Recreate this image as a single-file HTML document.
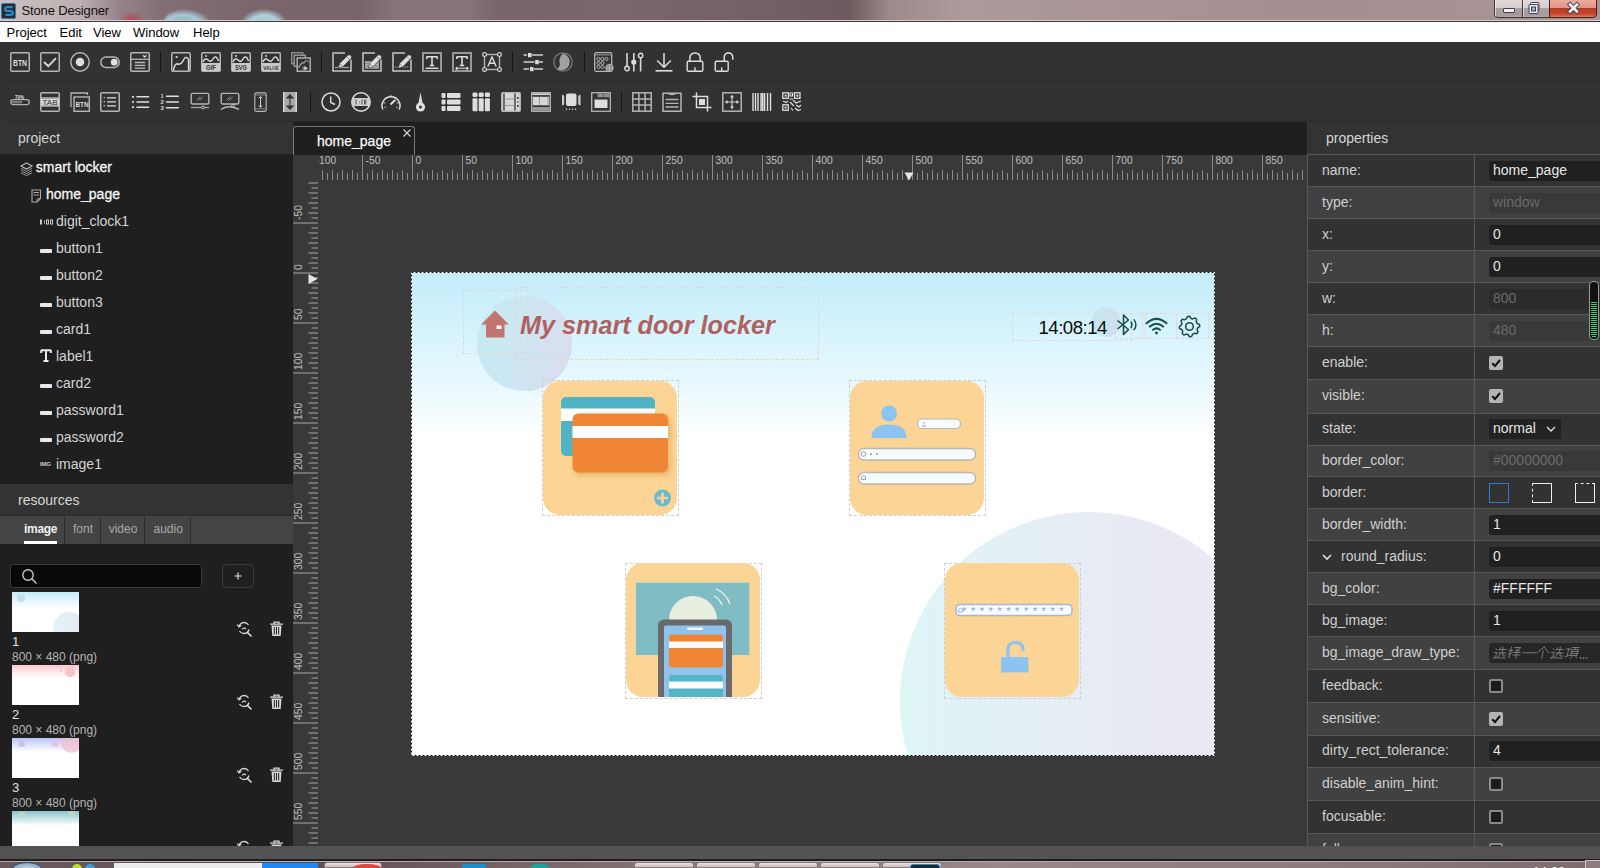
<!DOCTYPE html><html><head><meta charset='utf-8'><style>
*{margin:0;padding:0;box-sizing:border-box}
html,body{width:1600px;height:868px;overflow:hidden;background:#323232;font-family:"Liberation Sans", sans-serif;}
.a{position:absolute}
.t{position:absolute;white-space:nowrap;line-height:1}
svg{position:absolute;overflow:visible}
</style></head><body>
<div class='a' style='left:0;top:0;width:1600px;height:21px;background:linear-gradient(90deg,#cbc1c2 0px,#bcaeb0 80px,#96838a 120px,#846f74 160px,#7a666a 260px,#786468 360px,#867479 395px,#857378 470px,#786468 500px,#7a666a 620px,#736064 760px,#6d5b5f 850px,#9e8a8b 890px,#ad999a 960px,#a99394 1150px,#a48e90 1300px,#a99496 1600px)'></div>
<div class='a' style='left:118px;top:11px;width:28px;height:18px;border-radius:50%;background:radial-gradient(#b04a55,rgba(160,70,80,0) 70%)'></div>
<div class='a' style='left:164px;top:9px;width:48px;height:24px;border-radius:50%;background:radial-gradient(ellipse at 40% 70%,#6aa89a,#a8c8d8 45%,rgba(170,200,215,0) 72%)'></div>
<div class='a' style='left:240px;top:9px;width:48px;height:24px;border-radius:50%;background:radial-gradient(ellipse at 50% 70%,#8cc0c8,#b0d0dc 45%,rgba(170,200,215,0) 72%)'></div>
<div class='a' style='left:0;top:20px;width:1600px;height:1px;background:#d8cfd0'></div>
<div class='a' style='left:0;top:21px;width:1600px;height:1px;background:#3a3a3a'></div>
<div class='a' style='left:1px;top:3px;width:15px;height:16px;border-radius:2px;background:#2f2a2a;border:1px solid #1e7fb0'></div>
<svg style='left:1px;top:3px' width='16' height='16' viewBox='0 0 16 16'><path d='M11.5 4.2 L6.5 4.2 Q4.2 4.2 4.2 6.2 Q4.2 7.8 6.2 8 L9.8 8.2 Q11.8 8.4 11.8 10 Q11.8 11.8 9.5 11.8 L4.5 11.8' fill='none' stroke='#1b8fd0' stroke-width='2.2'/></svg>
<div class='t' style='left:21.5px;top:3.95px;font-size:13px;color:#111;letter-spacing:-0.15px'>Stone Designer</div>
<div class='a' style='left:1494px;top:-3px;width:56px;height:21px;border:1px solid #3c3436;border-radius:0 0 0 4px;background:linear-gradient(#e2dadb 0px,#d6cdce 10px,#aba1a3 10.5px,#a49a9c 17px,#b2a9aa)'></div>
<div class='a' style='left:1549px;top:-3px;width:48px;height:21px;border:1px solid #4a1e18;border-radius:0 0 4px 0;background:linear-gradient(#eeb2a6 0px,#e39484 10px,#b43a24 10.5px,#c8462e 16px,#e07a5e)'></div>
<div class='a' style='left:1495px;top:0;width:1px;height:16px;background:rgba(255,255,255,0.6)'></div>
<div class='a' style='left:1522px;top:0;width:1px;height:17px;background:#3c3436'></div>
<div class='a' style='left:1523px;top:0;width:1px;height:17px;background:rgba(255,255,255,0.55)'></div>
<div class='a' style='left:1503px;top:8px;width:12px;height:5px;border-radius:1px;background:#f2f0f0;border:1px solid #3a3f55'></div>
<svg style='left:1527px;top:1px' width='16' height='14' viewBox='0 0 16 14'><rect x='3.5' y='1.5' width='8.5' height='8' rx='1' fill='#f0eeee' stroke='#3a3f55' stroke-width='1'/><rect x='2' y='3.5' width='9' height='9' rx='1' fill='#f0eeee' stroke='#3a3f55' stroke-width='1'/><rect x='4.5' y='6' width='4' height='4' fill='#aaa' stroke='#3a3f55' stroke-width='1'/></svg>
<svg style='left:1566px;top:2px' width='15' height='12' viewBox='0 0 15 12'><path d='M4 2.5 L11 9.5 M11 2.5 L4 9.5' stroke='#3a3f55' stroke-width='4.4' stroke-linecap='square'/><path d='M4 2.5 L11 9.5 M11 2.5 L4 9.5' stroke='#f4f4f4' stroke-width='2.6' stroke-linecap='square'/></svg>
<div class='a' style='left:0;top:22px;width:1600px;height:20px;background:#fff'></div>
<div class='t' style='left:6.5px;top:26.25px;font-size:13px;color:#000;'>Project</div>
<div class='t' style='left:59.5px;top:26.25px;font-size:13px;color:#000;'>Edit</div>
<div class='t' style='left:93px;top:26.25px;font-size:13px;color:#000;'>View</div>
<div class='t' style='left:133px;top:26.25px;font-size:13px;color:#000;'>Window</div>
<div class='t' style='left:193px;top:26.25px;font-size:13px;color:#000;'>Help</div>
<div class='a' style='left:0;top:42px;width:1600px;height:80px;background:#323232'></div>
<div class='a' style='left:10px;top:81px;width:1590px;height:1px;background:#282828'></div>
<div class='a' style='left:10px;top:121px;width:1590px;height:1px;background:#282828'></div>
<svg style='left:10px;top:52px' width='20' height='20' viewBox='0 0 20 20'><rect x='0.75' y='0.75' width='18.5' height='18.5' rx='1' fill='none' stroke='#b5b5b5' stroke-width='1.5'/><text x='3' y='13.5' font-family='Liberation Sans' font-weight='bold' font-size='8.5' fill='#dedede' textLength='14' lengthAdjust='spacingAndGlyphs'>BTN</text></svg>
<svg style='left:40px;top:52px' width='20' height='20' viewBox='0 0 20 20'><rect x='0.75' y='0.75' width='18.5' height='18.5' rx='1' fill='none' stroke='#b5b5b5' stroke-width='1.5'/><path d='M4 10 L8.3 14.2 L16 6.2' fill='none' stroke='#dedede' stroke-width='1.8'/></svg>
<svg style='left:70px;top:52px' width='20' height='20' viewBox='0 0 20 20'><circle cx='10' cy='10' r='9.2' fill='none' stroke='#b5b5b5' stroke-width='1.5'/><circle cx='10' cy='10' r='4.3' fill='#dedede'/></svg>
<svg style='left:100px;top:52px' width='20' height='20' viewBox='0 0 20 20'><rect x='0.8' y='5' width='18.4' height='10.5' rx='5.2' fill='none' stroke='#b5b5b5' stroke-width='1.5'/><circle cx='14.2' cy='10.2' r='3.4' fill='#dedede'/></svg>
<svg style='left:130px;top:52px' width='20' height='20' viewBox='0 0 20 20'><rect x='0.75' y='0.75' width='18.5' height='18.5' rx='1' fill='none' stroke='#b5b5b5' stroke-width='1.5'/><path d='M1 7.3 H19' stroke='#b5b5b5' stroke-width='1.3'/><path d='M13 3.4 L14.7 5 L16.4 3.4' fill='none' stroke='#dedede' stroke-width='1.3'/><path d='M4.8 10.5 H15.2 M4.8 13.4 H15.2 M4.8 16.2 H15.2' stroke='#bdbdbd' stroke-width='1.3'/></svg>
<div class='a' style='left:160px;top:52px;width:1px;height:20px;background:#141414'></div>
<svg style='left:171px;top:52px' width='20' height='20' viewBox='0 0 20 20'><rect x='0.75' y='0.75' width='18.5' height='18.5' rx='1' fill='none' stroke='#b5b5b5' stroke-width='1.5'/><path d='M2.5 18.5 Q3.5 11 7 12 Q10 13 12.5 8 Q15 3 17.5 7.5 L17.6 18.5' fill='none' stroke='#dedede' stroke-width='1.5'/><circle cx='5.6' cy='5' r='1.1' fill='#dedede'/></svg>
<svg style='left:201px;top:52px' width='20' height='20' viewBox='0 0 20 20'><rect x='0.75' y='0.75' width='18.5' height='18.5' rx='1' fill='none' stroke='#b5b5b5' stroke-width='1.5'/><rect x='1' y='11' width='18' height='8' fill='#c9c9c9'/><path d='M2 10 Q4 5 7 8 T12 7 Q15 2 17.5 9' fill='none' stroke='#dedede' stroke-width='1.4'/><circle cx='5' cy='4' r='0.9' fill='#dedede'/><text x='5.0' y='18' font-family='Liberation Sans' font-weight='bold' font-size='7.2' fill='#333' textLength='10' lengthAdjust='spacingAndGlyphs'>GIF</text></svg>
<svg style='left:231px;top:52px' width='20' height='20' viewBox='0 0 20 20'><rect x='0.75' y='0.75' width='18.5' height='18.5' rx='1' fill='none' stroke='#b5b5b5' stroke-width='1.5'/><rect x='1' y='11' width='18' height='8' fill='#c9c9c9'/><path d='M2 10 Q4 5 7 8 T12 7 Q15 2 17.5 9' fill='none' stroke='#dedede' stroke-width='1.4'/><circle cx='5' cy='4' r='0.9' fill='#dedede'/><text x='4.0' y='18' font-family='Liberation Sans' font-weight='bold' font-size='7.2' fill='#333' textLength='12' lengthAdjust='spacingAndGlyphs'>SVG</text></svg>
<svg style='left:261px;top:52px' width='20' height='20' viewBox='0 0 20 20'><rect x='0.75' y='0.75' width='18.5' height='18.5' rx='1' fill='none' stroke='#b5b5b5' stroke-width='1.5'/><rect x='1' y='11' width='18' height='8' fill='#c9c9c9'/><path d='M2 10 Q4 5 7 8 T12 7 Q15 2 17.5 9' fill='none' stroke='#dedede' stroke-width='1.4'/><circle cx='5' cy='4' r='0.9' fill='#dedede'/><text x='2.25' y='18' font-family='Liberation Sans' font-weight='bold' font-size='6' fill='#333' textLength='15.5' lengthAdjust='spacingAndGlyphs'>VALUE</text></svg>
<svg style='left:291px;top:52px' width='20' height='20' viewBox='0 0 20 20'><rect x='0.7' y='0.7' width='11' height='11' fill='none' stroke='#8c8c8c' stroke-width='1.4'/><rect x='3.2' y='3.2' width='11' height='11' fill='#323232' stroke='#9a9a9a' stroke-width='1.4'/><rect x='6.2' y='6' width='13' height='13.3' fill='#323232' stroke='#b5b5b5' stroke-width='1.4'/><path d='M7.5 16 Q11 9 13 11 Q15 7 17.5 10' fill='none' stroke='#aaa' stroke-width='1.1'/><path d='M13.5 14.5 L16.5 16.3 L13.5 18 Z M12 14.5 V18' fill='#ccc' stroke='#ccc' stroke-width='0.8'/></svg>
<div class='a' style='left:321px;top:52px;width:1px;height:20px;background:#141414'></div>
<svg style='left:332px;top:52px' width='20' height='20' viewBox='0 0 20 20'><path d='M13 1 H1 V19 H19 V7.5' fill='none' stroke='#c8c8c8' stroke-width='1.5'/><path d='M3 15.5 H17' stroke='#aaa' stroke-width='1.2'/><path d='M6.2 16.2 L7.6 11.6 L15.6 3.6 Q17.2 2 18.8 3.6 Q20.4 5.2 18.8 6.8 L10.8 14.8 Z' fill='#dedede' stroke='#323232' stroke-width='0.6'/><path d='M7.8 11.8 L10.6 14.6 M14.6 4.6 L17.8 7.8' stroke='#777' stroke-width='0.7'/></svg>
<svg style='left:362px;top:52px' width='20' height='20' viewBox='0 0 20 20'><path d='M13 1 H1 V19 H19 V7.5' fill='none' stroke='#c8c8c8' stroke-width='1.5'/><rect x='3' y='9' width='14' height='8' fill='#8d8d8d'/><path d='M3 10.2 H17 M3 12.6 H17 M3 15 H17' stroke='#b9b9b9' stroke-width='0.8'/><path d='M6.2 16.2 L7.6 11.6 L15.6 3.6 Q17.2 2 18.8 3.6 Q20.4 5.2 18.8 6.8 L10.8 14.8 Z' fill='#dedede' stroke='#323232' stroke-width='0.6'/><path d='M7.8 11.8 L10.6 14.6 M14.6 4.6 L17.8 7.8' stroke='#777' stroke-width='0.7'/></svg>
<svg style='left:392px;top:52px' width='20' height='20' viewBox='0 0 20 20'><path d='M13 1 H1 V19 H19 V7.5' fill='none' stroke='#c8c8c8' stroke-width='1.5'/><path d='M3 15 H17' stroke='#bbb' stroke-width='1.2' stroke-dasharray='1.2 1.2'/><path d='M6.2 16.2 L7.6 11.6 L15.6 3.6 Q17.2 2 18.8 3.6 Q20.4 5.2 18.8 6.8 L10.8 14.8 Z' fill='#dedede' stroke='#323232' stroke-width='0.6'/><path d='M7.8 11.8 L10.6 14.6 M14.6 4.6 L17.8 7.8' stroke='#777' stroke-width='0.7'/></svg>
<svg style='left:422px;top:52px' width='20' height='20' viewBox='0 0 20 20'><rect x='1' y='1' width='18' height='18' fill='none' stroke='#999' stroke-width='2'/><path d='M4.8 4.8 H15.2 M4.8 4.5 V7 M15.2 4.5 V7 M10 4.8 V13.5 M7.8 13.5 H12.2' fill='none' stroke='#dedede' stroke-width='1.6'/><path d='M3.5 16.3 H16.5' stroke='#dedede' stroke-width='1.4'/></svg>
<svg style='left:452px;top:52px' width='20' height='20' viewBox='0 0 20 20'><rect x='1' y='1' width='18' height='18' fill='none' stroke='#999' stroke-width='2'/><path d='M4.8 4.8 H15.2 M4.8 4.5 V7 M15.2 4.5 V7 M10 4.8 V13.5 M7.8 13.5 H12.2' fill='none' stroke='#dedede' stroke-width='1.6'/><path d='M3.8 16.3 H16.2 M5.5 14.8 L3.8 16.3 L5.5 17.8 M14.5 14.8 L16.2 16.3 L14.5 17.8' fill='none' stroke='#dedede' stroke-width='1.1'/></svg>
<svg style='left:482px;top:52px' width='20' height='20' viewBox='0 0 20 20'><rect x='2.5' y='2.5' width='15' height='15' fill='none' stroke='#b5b5b5' stroke-width='1.4'/><circle cx='2.5' cy='2.5' r='1.9' fill='#323232' stroke='#ccc' stroke-width='1.2'/><circle cx='17.5' cy='2.5' r='1.9' fill='#323232' stroke='#ccc' stroke-width='1.2'/><circle cx='2.5' cy='17.5' r='1.9' fill='#323232' stroke='#ccc' stroke-width='1.2'/><circle cx='17.5' cy='17.5' r='1.9' fill='#323232' stroke='#ccc' stroke-width='1.2'/><path d='M5.8 14.5 L10 5 L14.2 14.5 M7.3 11.3 H12.7' fill='none' stroke='#dedede' stroke-width='1.4'/></svg>
<div class='a' style='left:512px;top:52px;width:1px;height:20px;background:#141414'></div>
<svg style='left:523px;top:52px' width='20' height='20' viewBox='0 0 20 20'><path d='M0.5 3 H4 M9 3 H20 M0.5 10 H11.5 M16 10 H20 M0.5 17 H6 M11 17 H20' stroke='#d0d0d0' stroke-width='1.6'/><rect x='5' y='1' width='3.5' height='4.2' fill='#dedede'/><rect x='12.2' y='8' width='3.5' height='4.2' fill='#dedede'/><rect x='7' y='15' width='3.5' height='4.2' fill='#dedede'/></svg>
<svg style='left:553px;top:52px' width='20' height='20' viewBox='0 0 20 20'><circle cx='10' cy='10' r='9.2' fill='none' stroke='#777' stroke-width='1.3'/><path d='M10 1.6 A8.4 8.4 0 1 1 4 17 Q8 14 6.5 10 Q6 5 10 1.6 Z' fill='#a0a0a0'/></svg>
<div class='a' style='left:584px;top:52px;width:1px;height:20px;background:#141414'></div>
<svg style='left:594px;top:52px' width='20' height='20' viewBox='0 0 20 20'><rect x='0.7' y='0.7' width='17' height='18.6' rx='1.5' fill='none' stroke='#b5b5b5' stroke-width='1.3'/><path d='M1 2.8 H17.5' stroke='#888' stroke-width='1.3'/><circle cx='4.5' cy='7' r='1.6' fill='none' stroke='#bbb' stroke-width='0.9'/><circle cx='8.5' cy='7' r='1.6' fill='none' stroke='#bbb' stroke-width='0.9'/><circle cx='12.5' cy='7' r='1.6' fill='none' stroke='#bbb' stroke-width='0.9'/><circle cx='4.5' cy='11' r='1.6' fill='none' stroke='#bbb' stroke-width='0.9'/><circle cx='8.5' cy='11' r='1.6' fill='none' stroke='#bbb' stroke-width='0.9'/><circle cx='4.5' cy='15' r='1.6' fill='none' stroke='#bbb' stroke-width='0.9'/><circle cx='8.5' cy='15' r='1.6' fill='none' stroke='#bbb' stroke-width='0.9'/><circle cx='15.5' cy='16' r='3.8' fill='#8a8a8a' stroke='#bbb' stroke-width='0.8'/><path d='M12 16 H19 M15.5 12.5 V19.5' stroke='#ccc' stroke-width='0.6'/></svg>
<svg style='left:624px;top:52px' width='20' height='20' viewBox='0 0 20 20'><path d='M3 1 V14.5 M9.8 1 V19.5 M16.6 6 V19.5' stroke='#d8d8d8' stroke-width='1.6'/><circle cx='3' cy='16.5' r='2.2' fill='#323232' stroke='#dedede' stroke-width='1.4'/><circle cx='9.8' cy='10' r='2.6' fill='#dedede'/><circle cx='16.6' cy='3.5' r='2.2' fill='#323232' stroke='#dedede' stroke-width='1.4'/></svg>
<svg style='left:654px;top:52px' width='20' height='20' viewBox='0 0 20 20'><path d='M10 1 V15.5 M3.2 8.5 L10 15.3 L16.8 8.5' fill='none' stroke='#dedede' stroke-width='1.5'/><path d='M1.5 18.8 H18.5' stroke='#dedede' stroke-width='1.6'/></svg>
<svg style='left:685px;top:52px' width='20' height='20' viewBox='0 0 20 20'><path d='M4.8 9 V6.5 Q4.8 1 10 1 Q15.2 1 15.2 6.5 V9' fill='none' stroke='#dedede' stroke-width='1.5'/><rect x='2.2' y='9.2' width='15.6' height='10' rx='1.3' fill='none' stroke='#dedede' stroke-width='1.4'/><path d='M10 15.2 V19' stroke='#dedede' stroke-width='1.4'/></svg>
<svg style='left:714px;top:52px' width='20' height='20' viewBox='0 0 20 20'><path d='M10.2 9 V5.8 Q10.2 1 14.5 1 Q18.8 1 18.8 5.8 V7.8' fill='none' stroke='#dedede' stroke-width='1.5'/><rect x='1.2' y='9.2' width='13' height='10' rx='1.3' fill='none' stroke='#dedede' stroke-width='1.4'/><path d='M7.7 15.2 V19' stroke='#dedede' stroke-width='1.4'/></svg>
<svg style='left:10px;top:92px' width='20' height='20' viewBox='0 0 20 20'><rect x='0.7' y='7.6' width='18.6' height='5' rx='2.5' fill='none' stroke='#b0b0b0' stroke-width='1.3'/><rect x='2' y='8.8' width='10' height='2.6' fill='#777'/><text x='5' y='6.5' font-family='Liberation Sans' font-weight='bold' font-size='5.5' fill='#dedede' textLength='9' lengthAdjust='spacingAndGlyphs'>70%</text></svg>
<svg style='left:40px;top:92px' width='20' height='20' viewBox='0 0 20 20'><rect x='0.75' y='0.75' width='18.5' height='18.5' rx='1' fill='none' stroke='#b5b5b5' stroke-width='1.5'/><path d='M1 5.8 H19 M1 14 H19' stroke='#b5b5b5' stroke-width='1.3'/><rect x='1' y='6.5' width='18' height='7' fill='#d4d4d4'/><text x='2.5' y='12.8' font-family='Liberation Sans' font-weight='normal' font-size='7.5' fill='#333' textLength='15' lengthAdjust='spacingAndGlyphs'>TAB</text></svg>
<svg style='left:70px;top:92px' width='20' height='20' viewBox='0 0 20 20'><path d='M1 15.3 V1 H17.5 V3' fill='none' stroke='#b5b5b5' stroke-width='1.3'/><rect x='4' y='5' width='15.3' height='14.3' fill='#323232' stroke='#b5b5b5' stroke-width='1.4'/><text x='5.5' y='15' font-family='Liberation Sans' font-weight='bold' font-size='7.2' fill='#dedede' textLength='13' lengthAdjust='spacingAndGlyphs'>BTN</text></svg>
<svg style='left:100px;top:92px' width='20' height='20' viewBox='0 0 20 20'><rect x='0.75' y='0.75' width='18.5' height='18.5' rx='1' fill='none' stroke='#b5b5b5' stroke-width='1.5'/><path d='M7 5.8 H16 M7 9.8 H16 M7 13.8 H16' stroke='#dedede' stroke-width='1.3'/><path d='M3.3 5 L5.2 5 L4.25 6.5 Z M3.3 9 L5.2 9 L4.25 10.5 Z M3.3 13 L5.2 13 L4.25 14.5 Z' fill='#dedede'/></svg>
<svg style='left:130px;top:92px' width='20' height='20' viewBox='0 0 20 20'><circle cx='3' cy='4.8' r='1.1' fill='#dedede'/><circle cx='3' cy='10' r='1.1' fill='#dedede'/><circle cx='3' cy='15.2' r='1.1' fill='#dedede'/><path d='M7 4.8 H18.5 M7 10 H18.5 M7 15.2 H18.5' stroke='#dedede' stroke-width='1.6' stroke-linecap='round'/></svg>
<svg style='left:160px;top:92px' width='20' height='20' viewBox='0 0 20 20'><path d='M6.5 4.3 H18.3 M6.5 10 H18.3 M6.5 15.7 H18.3' stroke='#dedede' stroke-width='1.6' stroke-linecap='round'/><text x='0.8' y='6.3' font-family='Liberation Sans' font-weight='bold' font-size='5.8' fill='#dedede' textLength='2.8' lengthAdjust='spacingAndGlyphs'>1</text><text x='0.6' y='12' font-family='Liberation Sans' font-weight='bold' font-size='5.8' fill='#dedede' textLength='3.3' lengthAdjust='spacingAndGlyphs'>2</text><text x='0.6' y='17.8' font-family='Liberation Sans' font-weight='bold' font-size='5.8' fill='#dedede' textLength='3.3' lengthAdjust='spacingAndGlyphs'>3</text></svg>
<svg style='left:190px;top:92px' width='20' height='20' viewBox='0 0 20 20'><rect x='1.2' y='1.4' width='17.6' height='10.6' rx='1.5' fill='none' stroke='#b5b5b5' stroke-width='1.4'/><path d='M7 8.2 L10 4.8 M9 8.6 L12.5 4.8' stroke='#aaa' stroke-width='0.9'/><path d='M1 15.5 H19' stroke='#aaa' stroke-width='1.3'/><circle cx='13' cy='15.5' r='1.4' fill='#323232' stroke='#ccc' stroke-width='1'/></svg>
<svg style='left:220px;top:92px' width='20' height='20' viewBox='0 0 20 20'><rect x='1.2' y='1.4' width='17.6' height='10.6' rx='1.5' fill='none' stroke='#b5b5b5' stroke-width='1.4'/><path d='M7 8.2 L10 4.8 M9 8.6 L12.5 4.8' stroke='#aaa' stroke-width='0.9'/><path d='M0.8 17.6 Q8 12 19 17.3' fill='none' stroke='#bbb' stroke-width='1.3'/><circle cx='13' cy='13.8' r='1.4' fill='#323232' stroke='#ccc' stroke-width='1'/></svg>
<svg style='left:254px;top:92px' width='13' height='20' viewBox='0 0 13 20'><rect x='0.8' y='0.8' width='11.4' height='18.5' rx='1.6' fill='none' stroke='#b5b5b5' stroke-width='1.2'/><path d='M1 3 H12 M1 16.8 H12' stroke='#888' stroke-width='1'/><path d='M4.6 6.3 L6.5 4.5 L8.4 6.3 M6.5 5 V15 M4.6 13.5 L6.5 15.3 L8.4 13.5' fill='none' stroke='#ddd' stroke-width='0.9'/></svg>
<svg style='left:283px;top:92px' width='14' height='20' viewBox='0 0 14 20'><rect x='0' y='0' width='14' height='20' fill='#a8a8a8'/><rect x='0' y='0' width='1.5' height='20' fill='#d4d4d4'/><rect x='12.5' y='0' width='1.5' height='20' fill='#d4d4d4'/><path d='M7 3.5 V16.5 M4 6 L7 2.8 L10 6 Z M4 14 L7 17.2 L10 14 Z' fill='#333' stroke='#333' stroke-width='1.1'/></svg>
<div class='a' style='left:310px;top:92px;width:1px;height:20px;background:#141414'></div>
<svg style='left:321px;top:92px' width='20' height='20' viewBox='0 0 20 20'><circle cx='10' cy='10' r='9' fill='none' stroke='#dedede' stroke-width='1.5'/><path d='M9.7 4.5 V10.5 L14 12.5' fill='none' stroke='#dedede' stroke-width='1.4'/></svg>
<svg style='left:351px;top:92px' width='20' height='20' viewBox='0 0 20 20'><circle cx='10' cy='10' r='9.2' fill='none' stroke='#dedede' stroke-width='1.5'/><rect x='1' y='6' width='18' height='8' fill='#d0d0d0'/><path d='M5 7.5 V12.5 M8.6 9 V9.6 M8.6 10.8 V11.4 M11 7.5 V12.5 M13.5 7.5 V12.5 M14.8 7.5 V12.5' stroke='#444' stroke-width='0.9'/></svg>
<svg style='left:381px;top:92px' width='20' height='20' viewBox='0 0 20 20'><path d='M1.8 17.5 A9 9 0 1 1 18.2 17.5' fill='none' stroke='#dedede' stroke-width='1.5'/><path d='M9.5 12.5 L14.2 8' stroke='#dedede' stroke-width='1.9'/><path d='M10 3 V5 M4.5 5.8 L5.8 7.1 M15.5 5.8 L14.2 7.1 M2.5 11 H4.3 M17.5 11 H15.7 M3.5 15.5 L5 15 M16.5 15.5 L15 15' stroke='#ddd' stroke-width='0.9'/></svg>
<svg style='left:414px;top:92px' width='13' height='20' viewBox='0 0 13 20'><path d='M4.3 12 L6.5 0.5 L8.7 12 Z' fill='#dedede'/><circle cx='6.5' cy='15' r='4.6' fill='#dedede'/><circle cx='6.5' cy='15' r='1.5' fill='#323232'/></svg>
<svg style='left:441px;top:92px' width='20' height='20' viewBox='0 0 20 20'><rect x='0.5' y='1' width='4' height='5' rx='1' fill='#dedede'/><rect x='6' y='1' width='13.5' height='5' rx='1' fill='#dedede'/><rect x='0.5' y='7.5' width='4' height='5' rx='1' fill='#dedede'/><rect x='6' y='7.5' width='13.5' height='5' rx='1' fill='#dedede'/><rect x='0.5' y='14' width='4' height='5' rx='1' fill='#dedede'/><rect x='6' y='14' width='13.5' height='5' rx='1' fill='#dedede'/></svg>
<svg style='left:471px;top:92px' width='20' height='20' viewBox='0 0 20 20'><rect x='1.5' y='0.5' width='5' height='4.5' rx='1.2' fill='#dedede'/><rect x='7.7' y='0.5' width='5' height='4.5' rx='1.2' fill='#dedede'/><rect x='13.9' y='0.5' width='5' height='4.5' rx='1.2' fill='#dedede'/><rect x='1.5' y='6.3' width='5' height='13' rx='1' fill='#dedede'/><rect x='7.7' y='6.3' width='5' height='13' rx='1' fill='#dedede'/><rect x='13.9' y='6.3' width='5' height='13' rx='1' fill='#dedede'/></svg>
<svg style='left:501px;top:92px' width='20' height='20' viewBox='0 0 20 20'><rect x='0.7' y='0.7' width='18.6' height='18.6' rx='1' fill='#d6d6d6' stroke='#b5b5b5' stroke-width='1.3'/><path d='M3 1.5 V18.5 M14 1.5 V18.5' stroke='#333' stroke-width='1.3'/><path d='M3.5 7 H13.5 M3.5 13.5 H13.5' stroke='#999' stroke-width='1'/><rect x='16' y='5' width='1.6' height='1.8' fill='#333'/><rect x='16' y='9' width='1.6' height='1.8' fill='#777'/><rect x='16' y='13' width='1.6' height='1.8' fill='#333'/></svg>
<svg style='left:531px;top:92px' width='20' height='20' viewBox='0 0 20 20'><rect x='0.7' y='0.7' width='18.6' height='18.6' fill='#323232' stroke='#b5b5b5' stroke-width='1.3'/><rect x='1.3' y='1.3' width='17.4' height='1.8' fill='#d6d6d6'/><rect x='1.8' y='4.8' width='16.4' height='8.5' fill='#d6d6d6'/><path d='M8.5 4.8 V13.3 M17 4.8 V13.3' stroke='#999' stroke-width='1'/><rect x='1.3' y='15' width='17.4' height='3.7' fill='#999'/></svg>
<svg style='left:561px;top:92px' width='20' height='20' viewBox='0 0 20 20'><rect x='5' y='1.5' width='10.5' height='12.5' rx='2' fill='#dedede'/><path d='M1 2.5 L3.2 3.8 V12.5 L1 13.5 Z M19.5 2.5 L17.3 3.8 V12.5 L19.5 13.5 Z' fill='#ccc'/><circle cx='5.5' cy='17.2' r='0.7' fill='#ddd'/><circle cx='8.5' cy='17.2' r='0.7' fill='#ddd'/><circle cx='11.5' cy='17.2' r='0.7' fill='#ddd'/><circle cx='14.5' cy='17.2' r='0.7' fill='#ddd'/></svg>
<svg style='left:591px;top:92px' width='20' height='20' viewBox='0 0 20 20'><rect x='0.7' y='0.7' width='18.6' height='18.6' fill='#323232' stroke='#b5b5b5' stroke-width='1.3'/><rect x='6.5' y='1.3' width='6' height='4' fill='#8e8e8e'/><rect x='13' y='1.3' width='5.8' height='4' fill='#8e8e8e'/><rect x='3.5' y='7.5' width='13' height='8.5' fill='#dedede'/></svg>
<div class='a' style='left:621px;top:92px;width:1px;height:20px;background:#141414'></div>
<svg style='left:632px;top:92px' width='20' height='20' viewBox='0 0 20 20'><rect x='0.8' y='0.8' width='18.4' height='18.4' fill='none' stroke='#b5b5b5' stroke-width='1.5'/><path d='M6.9 1 V19 M13.1 1 V19 M1 6.9 H19 M1 13.1 H19' stroke='#b5b5b5' stroke-width='1.5'/></svg>
<svg style='left:662px;top:92px' width='20' height='20' viewBox='0 0 20 20'><path d='M6.5 1.2 H1 V19.2 H19 V1.2 H13.5' fill='none' stroke='#b5b5b5' stroke-width='1.5'/><path d='M6.5 0.6 V2 Q10 3.5 13.5 2 V0.6' fill='#b5b5b5' stroke='#b5b5b5' stroke-width='1'/><path d='M3.5 7.5 H16.5 M3.5 11.3 H16.5 M3.5 15 H16.5' stroke='#b5b5b5' stroke-width='1.3'/></svg>
<svg style='left:692px;top:92px' width='20' height='20' viewBox='0 0 20 20'><path d='M4.5 0.5 V15.5 H19.5 M0.5 4.5 H15.5 V19.5' fill='none' stroke='#dedede' stroke-width='1.5'/><rect x='7' y='7' width='6' height='6' fill='#dedede'/></svg>
<svg style='left:722px;top:92px' width='20' height='20' viewBox='0 0 20 20'><rect x='0.8' y='0.8' width='18.4' height='18.4' fill='none' stroke='#b5b5b5' stroke-width='1.5'/><path d='M10 3.5 V16.5 M3.5 10 H16.5' stroke='#ccc' stroke-width='1.2'/><path d='M8 5.5 L10 3 L12 5.5 Z M8 14.5 L10 17 L12 14.5 Z M5.5 8 L3 10 L5.5 12 Z M14.5 8 L17 10 L14.5 12 Z' fill='#ddd'/></svg>
<svg style='left:752px;top:92px' width='20' height='20' viewBox='0 0 20 20'><path d='M1 1 V19 M3.5 1 V19 M6 1 V19 M9 1 V19 M12.6 1 V19 M15.5 1 V19 M18.5 1 V19' stroke='#dedede' stroke-width='1.4'/><path d='M10.6 1 V19' stroke='#dedede' stroke-width='1.9'/></svg>
<svg style='left:782px;top:92px' width='20' height='20' viewBox='0 0 20 20'><rect x='0.8' y='0.8' width='5.5' height='5.5' fill='none' stroke='#dedede' stroke-width='1.3'/><rect x='12.5' y='0.8' width='5.5' height='5.5' fill='none' stroke='#dedede' stroke-width='1.3'/><rect x='0.8' y='12.8' width='5.5' height='5.5' fill='none' stroke='#dedede' stroke-width='1.3'/><rect x='2.6' y='2.6' width='2' height='2' fill='#dedede'/><rect x='14.3' y='2.6' width='2' height='2' fill='#dedede'/><rect x='2.6' y='14.6' width='2' height='2' fill='#dedede'/><path d='M8 1 H10.5 V4 H8 Z M7.5 7 H11 M11 8 L14 11 L19 9 M8 10 L10 12 L12 14 M14 13 L17 15 L19 13 M9 16 L11 18.5 M13 16 L16 18.5 L19 17.5 M1 9 L4 10.5 L6 9' fill='none' stroke='#dedede' stroke-width='1.2'/></svg>
<div class='a' style='left:0;top:122px;width:293px;height:32px;background:#333333'></div>
<div class='a' style='left:0;top:154px;width:293px;height:330px;background:#1f1f1f'></div>
<div class='t' style='left:18px;top:131.10px;font-size:14px;color:#d6d6d6;'>project</div>
<svg style='left:20px;top:162px' width='13' height='14' viewBox='0 0 13 14'><path d='M6.5 1 L12 4 L6.5 7 L1 4 Z' fill='none' stroke='#bbb' stroke-width='1.1'/><path d='M1 6.3 L6.5 9.3 L12 6.3 M1 8.6 L6.5 11.6 L12 8.6 M1 10.9 L6.5 13.6 L12 10.9' fill='none' stroke='#999' stroke-width='1'/></svg>
<div class='t' style='left:35.8px;top:160.10px;font-size:14px;color:#f6f6f6;-webkit-text-stroke:0.3px #f6f6f6'>smart locker</div>
<svg style='left:31px;top:189px' width='11' height='14' viewBox='0 0 11 14'><path d='M1 1 H9.5 V9.5 L6 13 H1 Z' fill='none' stroke='#aaa' stroke-width='1.1'/><path d='M2.5 3.5 H8 M2.5 6 H8 M6 13 L6.3 10 L9.5 9.5' fill='none' stroke='#aaa' stroke-width='1'/></svg>
<div class='t' style='left:46px;top:187.10px;font-size:14px;color:#f6f6f6;-webkit-text-stroke:0.3px #f6f6f6'>home_page</div>
<svg style='left:40px;top:219px' width='13' height='6' viewBox='0 0 13 6'><rect x='0' y='0.5' width='2' height='5' fill='#ccc'/><rect x='4' y='1' width='1' height='4' fill='#999'/><rect x='6' y='0.5' width='3' height='5' fill='#ccc'/><rect x='10' y='0.5' width='3' height='5' fill='#ccc'/><rect x='7' y='1.5' width='1' height='3' fill='#1f1f1f'/><rect x='11' y='1.5' width='1' height='3' fill='#1f1f1f'/></svg>
<div class='t' style='left:56px;top:214.10px;font-size:14px;color:#d4d4d4;'>digit_clock1</div>
<div class='a' style='left:40px;top:249px;width:12px;height:4px;border-radius:1px;background:#e8e8e8'></div>
<div class='t' style='left:56px;top:241.10px;font-size:14px;color:#d4d4d4;'>button1</div>
<div class='a' style='left:40px;top:276px;width:12px;height:4px;border-radius:1px;background:#e8e8e8'></div>
<div class='t' style='left:56px;top:268.10px;font-size:14px;color:#d4d4d4;'>button2</div>
<div class='a' style='left:40px;top:303px;width:12px;height:4px;border-radius:1px;background:#e8e8e8'></div>
<div class='t' style='left:56px;top:295.10px;font-size:14px;color:#d4d4d4;'>button3</div>
<div class='a' style='left:40px;top:330px;width:12px;height:4px;border-radius:1px;background:#e8e8e8'></div>
<div class='t' style='left:56px;top:322.10px;font-size:14px;color:#d4d4d4;'>card1</div>
<svg style='left:40px;top:349px' width='12' height='13' viewBox='0 0 12 13'><path d='M1 1.2 H11 M1.2 1 V4 M10.8 1 V4 M6 1 V12 M3.5 12 H8.5' fill='none' stroke='#ececec' stroke-width='2'/></svg>
<div class='t' style='left:56px;top:349.10px;font-size:14px;color:#d4d4d4;'>label1</div>
<div class='a' style='left:40px;top:384px;width:12px;height:4px;border-radius:1px;background:#e8e8e8'></div>
<div class='t' style='left:56px;top:376.10px;font-size:14px;color:#d4d4d4;'>card2</div>
<div class='a' style='left:40px;top:411px;width:12px;height:4px;border-radius:1px;background:#e8e8e8'></div>
<div class='t' style='left:56px;top:403.10px;font-size:14px;color:#d4d4d4;'>password1</div>
<div class='a' style='left:40px;top:438px;width:12px;height:4px;border-radius:1px;background:#e8e8e8'></div>
<div class='t' style='left:56px;top:430.10px;font-size:14px;color:#d4d4d4;'>password2</div>
<div class='t' style='left:40px;top:461px;font-size:6px;font-weight:bold;color:#ccc;letter-spacing:-0.2px'>IMG</div>
<div class='t' style='left:56px;top:457.10px;font-size:14px;color:#d4d4d4;'>image1</div>
<div class='a' style='left:0;top:484px;width:293px;height:32px;background:#333333'></div>
<div class='a' style='left:0;top:515px;width:293px;height:1px;background:#2a2a2a'></div>
<div class='t' style='left:18px;top:493.10px;font-size:14px;color:#d6d6d6;'>resources</div>
<div class='a' style='left:0;top:516px;width:293px;height:28px;background:#444444'></div>
<div class='a' style='left:64px;top:517px;width:1px;height:27px;background:#2c2c2c'></div>
<div class='a' style='left:100px;top:517px;width:1px;height:27px;background:#2c2c2c'></div>
<div class='a' style='left:144px;top:517px;width:1px;height:27px;background:#2c2c2c'></div>
<div class='a' style='left:190px;top:517px;width:1px;height:27px;background:#2c2c2c'></div>
<div class='t' style='left:24px;top:522.80px;font-size:12px;color:#f0f0f0;font-weight:bold;letter-spacing:-0.3px'>image</div>
<div class='a' style='left:24px;top:541px;width:33px;height:3px;background:#fff'></div>
<div class='t' style='left:73px;top:522.80px;font-size:12px;color:#a8a8a8;'>font</div>
<div class='t' style='left:108.7px;top:522.80px;font-size:12px;color:#a8a8a8;'>video</div>
<div class='t' style='left:153.5px;top:522.80px;font-size:12px;color:#a8a8a8;'>audio</div>
<div class='a' style='left:0;top:544px;width:293px;height:302px;background:#1f1f1f'></div>
<div class='a' style='left:10px;top:564px;width:192px;height:24px;background:#080808;border:1px solid #3c3c3c;border-radius:4px'></div>
<svg style='left:21px;top:568px' width='18' height='18' viewBox='0 0 18 18'><circle cx='7' cy='7' r='5.2' fill='none' stroke='#c8c8c8' stroke-width='1.4'/><path d='M10.8 10.8 L15.5 15.5' stroke='#c8c8c8' stroke-width='1.5'/></svg>
<div class='a' style='left:222px;top:564px;width:32px;height:24px;background:#1f1f1f;border:1px solid #3c3c3c;border-radius:4px'></div>
<svg style='left:233px;top:571px' width='10' height='10' viewBox='0 0 10 10'><path d='M5 1.5 V8.5 M1.5 5 H8.5' stroke='#ddd' stroke-width='1.2'/></svg>
<div class='a' style='left:12px;top:592px;width:67px;height:40px;overflow:hidden;background:linear-gradient(#c3ecfa,#e2f6fd 20%,#ffffff 42%)'><div class='a' style='left:41px;top:20px;width:32px;height:32px;border-radius:50%;background:linear-gradient(90deg,#dff4f6,#e8e8f4)'></div><div class='a' style='left:5px;top:1.5px;width:8px;height:8px;border-radius:50%;background:#c2e0ef'></div><div class='a' style='left:57px;top:3px;width:2px;height:2px;border-radius:50%;background:#c4e4f0'></div></div>
<div class='t' style='left:12px;top:634.95px;font-size:13px;color:#e0e0e0;'>1</div>
<div class='t' style='left:12px;top:650.80px;font-size:12px;color:#b4b4b4;'>800 × 480 (png)</div>
<svg style='left:236px;top:620px' width='18' height='18' viewBox='0 0 18 18'><path d='M3 6.5 A5.2 5.2 0 0 1 12.5 5' fill='none' stroke='#d8d8d8' stroke-width='1.3'/><path d='M13 9.5 A5.2 5.2 0 0 1 3.5 11' fill='none' stroke='#d8d8d8' stroke-width='1.3'/><path d='M1 4.5 L3 7 L5.3 5' fill='none' stroke='#d8d8d8' stroke-width='1.2'/><path d='M6 9.5 Q8 7 10 9' fill='none' stroke='#d8d8d8' stroke-width='1.1'/><path d='M11 12 L15.5 16.5' stroke='#d8d8d8' stroke-width='1.7'/></svg>
<svg style='left:269px;top:621px' width='15' height='16' viewBox='0 0 15 16'><path d='M1 3.2 H14 M5 3 V1.2 H10 V3' fill='none' stroke='#d8d8d8' stroke-width='1.3'/><path d='M2.5 4.5 L3.3 15 H11.7 L12.5 4.5 Z' fill='#d8d8d8'/><path d='M5.3 6 V13.5 M7.5 6 V13.5 M9.7 6 V13.5' stroke='#1f1f1f' stroke-width='1'/></svg>
<div class='a' style='left:12px;top:665px;width:67px;height:40px;overflow:hidden;background:linear-gradient(#fcc6cc,#fde3e6 15%,#ffffff 33%)'><div class='a' style='left:53px;top:2px;width:10px;height:10px;border-radius:50%;background:#f9c4c8'></div><div class='a' style='left:48px;top:5px;width:2px;height:2px;border-radius:50%;background:#f6bcc2'></div></div>
<div class='t' style='left:12px;top:707.95px;font-size:13px;color:#e0e0e0;'>2</div>
<div class='t' style='left:12px;top:723.80px;font-size:12px;color:#b4b4b4;'>800 × 480 (png)</div>
<svg style='left:236px;top:693px' width='18' height='18' viewBox='0 0 18 18'><path d='M3 6.5 A5.2 5.2 0 0 1 12.5 5' fill='none' stroke='#d8d8d8' stroke-width='1.3'/><path d='M13 9.5 A5.2 5.2 0 0 1 3.5 11' fill='none' stroke='#d8d8d8' stroke-width='1.3'/><path d='M1 4.5 L3 7 L5.3 5' fill='none' stroke='#d8d8d8' stroke-width='1.2'/><path d='M6 9.5 Q8 7 10 9' fill='none' stroke='#d8d8d8' stroke-width='1.1'/><path d='M11 12 L15.5 16.5' stroke='#d8d8d8' stroke-width='1.7'/></svg>
<svg style='left:269px;top:694px' width='15' height='16' viewBox='0 0 15 16'><path d='M1 3.2 H14 M5 3 V1.2 H10 V3' fill='none' stroke='#d8d8d8' stroke-width='1.3'/><path d='M2.5 4.5 L3.3 15 H11.7 L12.5 4.5 Z' fill='#d8d8d8'/><path d='M5.3 6 V13.5 M7.5 6 V13.5 M9.7 6 V13.5' stroke='#1f1f1f' stroke-width='1'/></svg>
<div class='a' style='left:12px;top:738px;width:67px;height:40px;overflow:hidden;background:linear-gradient(#b6c4f6,#dfe6fb 18%,#ffffff 35%)'><div class='a' style='left:48.5px;top:-6px;width:21px;height:21px;border-radius:50%;background:rgba(244,190,205,0.75)'></div><div class='a' style='left:6px;top:2.7px;width:6.6px;height:6.6px;border-radius:50%;background:#cdc0ee'></div><div class='a' style='left:38.5px;top:1px;width:8px;height:8px;border-radius:50%;background:#dcc8ea'></div></div>
<div class='t' style='left:12px;top:780.95px;font-size:13px;color:#e0e0e0;'>3</div>
<div class='t' style='left:12px;top:796.80px;font-size:12px;color:#b4b4b4;'>800 × 480 (png)</div>
<svg style='left:236px;top:766px' width='18' height='18' viewBox='0 0 18 18'><path d='M3 6.5 A5.2 5.2 0 0 1 12.5 5' fill='none' stroke='#d8d8d8' stroke-width='1.3'/><path d='M13 9.5 A5.2 5.2 0 0 1 3.5 11' fill='none' stroke='#d8d8d8' stroke-width='1.3'/><path d='M1 4.5 L3 7 L5.3 5' fill='none' stroke='#d8d8d8' stroke-width='1.2'/><path d='M6 9.5 Q8 7 10 9' fill='none' stroke='#d8d8d8' stroke-width='1.1'/><path d='M11 12 L15.5 16.5' stroke='#d8d8d8' stroke-width='1.7'/></svg>
<svg style='left:269px;top:767px' width='15' height='16' viewBox='0 0 15 16'><path d='M1 3.2 H14 M5 3 V1.2 H10 V3' fill='none' stroke='#d8d8d8' stroke-width='1.3'/><path d='M2.5 4.5 L3.3 15 H11.7 L12.5 4.5 Z' fill='#d8d8d8'/><path d='M5.3 6 V13.5 M7.5 6 V13.5 M9.7 6 V13.5' stroke='#1f1f1f' stroke-width='1'/></svg>
<div class='a' style='left:12px;top:811px;width:67px;height:40px;overflow:hidden;background:linear-gradient(#86c2cc,#bcdfe4 16%,#ffffff 36%)'><div class='a' style='left:6px;top:1px;width:8px;height:6px;border-radius:50%;background:#b9d8c8'></div><div class='a' style='left:56px;top:0px;width:8px;height:6px;border-radius:50%;background:#b9d8c8'></div></div>
<svg style='left:236px;top:839px' width='18' height='18' viewBox='0 0 18 18'><path d='M3 6.5 A5.2 5.2 0 0 1 12.5 5' fill='none' stroke='#d8d8d8' stroke-width='1.3'/><path d='M13 9.5 A5.2 5.2 0 0 1 3.5 11' fill='none' stroke='#d8d8d8' stroke-width='1.3'/><path d='M1 4.5 L3 7 L5.3 5' fill='none' stroke='#d8d8d8' stroke-width='1.2'/><path d='M6 9.5 Q8 7 10 9' fill='none' stroke='#d8d8d8' stroke-width='1.1'/><path d='M11 12 L15.5 16.5' stroke='#d8d8d8' stroke-width='1.7'/></svg>
<svg style='left:269px;top:840px' width='15' height='16' viewBox='0 0 15 16'><path d='M1 3.2 H14 M5 3 V1.2 H10 V3' fill='none' stroke='#d8d8d8' stroke-width='1.3'/><path d='M2.5 4.5 L3.3 15 H11.7 L12.5 4.5 Z' fill='#d8d8d8'/><path d='M5.3 6 V13.5 M7.5 6 V13.5 M9.7 6 V13.5' stroke='#1f1f1f' stroke-width='1'/></svg>
<div class='a' style='left:293px;top:122px;width:1014px;height:33px;background:#1f1f1f'></div>
<div class='a' style='left:293px;top:155px;width:1014px;height:691px;background:#393939'></div>
<div class='a' style='left:293px;top:126px;width:122px;height:29px;background:#1f1f1f;border:1px solid #7a7a7a;border-bottom:none;border-radius:3px 3px 0 0'></div>
<div class='t' style='left:317px;top:134.10px;font-size:14px;color:#f8f8f8;-webkit-text-stroke:0.25px #f8f8f8'>home_page</div>
<svg style='left:402px;top:128px' width='10' height='10' viewBox='0 0 10 10'><path d='M1.5 1.5 L8.5 8.5 M8.5 1.5 L1.5 8.5' stroke='#d8d8d8' stroke-width='1.1'/></svg>
<svg style='left:0;top:0' width='1600' height='868'><path d='M322.5 170 V180 M327.5 173 V180 M332.5 170 V180 M337.5 173 V180 M342.5 170 V180 M347.5 173 V180 M352.5 170 V180 M357.5 173 V180 M362.5 155 V180 M367.5 173 V180 M372.5 170 V180 M377.5 173 V180 M382.5 170 V180 M387.5 173 V180 M392.5 170 V180 M397.5 173 V180 M402.5 170 V180 M407.5 173 V180 M412.5 155 V180 M417.5 173 V180 M422.5 170 V180 M427.5 173 V180 M432.5 170 V180 M437.5 173 V180 M442.5 170 V180 M447.5 173 V180 M452.5 170 V180 M457.5 173 V180 M462.5 155 V180 M467.5 173 V180 M472.5 170 V180 M477.5 173 V180 M482.5 170 V180 M487.5 173 V180 M492.5 170 V180 M497.5 173 V180 M502.5 170 V180 M507.5 173 V180 M512.5 155 V180 M517.5 173 V180 M522.5 170 V180 M527.5 173 V180 M532.5 170 V180 M537.5 173 V180 M542.5 170 V180 M547.5 173 V180 M552.5 170 V180 M557.5 173 V180 M562.5 155 V180 M567.5 173 V180 M572.5 170 V180 M577.5 173 V180 M582.5 170 V180 M587.5 173 V180 M592.5 170 V180 M597.5 173 V180 M602.5 170 V180 M607.5 173 V180 M612.5 155 V180 M617.5 173 V180 M622.5 170 V180 M627.5 173 V180 M632.5 170 V180 M637.5 173 V180 M642.5 170 V180 M647.5 173 V180 M652.5 170 V180 M657.5 173 V180 M662.5 155 V180 M667.5 173 V180 M672.5 170 V180 M677.5 173 V180 M682.5 170 V180 M687.5 173 V180 M692.5 170 V180 M697.5 173 V180 M702.5 170 V180 M707.5 173 V180 M712.5 155 V180 M717.5 173 V180 M722.5 170 V180 M727.5 173 V180 M732.5 170 V180 M737.5 173 V180 M742.5 170 V180 M747.5 173 V180 M752.5 170 V180 M757.5 173 V180 M762.5 155 V180 M767.5 173 V180 M772.5 170 V180 M777.5 173 V180 M782.5 170 V180 M787.5 173 V180 M792.5 170 V180 M797.5 173 V180 M802.5 170 V180 M807.5 173 V180 M812.5 155 V180 M817.5 173 V180 M822.5 170 V180 M827.5 173 V180 M832.5 170 V180 M837.5 173 V180 M842.5 170 V180 M847.5 173 V180 M852.5 170 V180 M857.5 173 V180 M862.5 155 V180 M867.5 173 V180 M872.5 170 V180 M877.5 173 V180 M882.5 170 V180 M887.5 173 V180 M892.5 170 V180 M897.5 173 V180 M902.5 170 V180 M907.5 173 V180 M912.5 155 V180 M917.5 173 V180 M922.5 170 V180 M927.5 173 V180 M932.5 170 V180 M937.5 173 V180 M942.5 170 V180 M947.5 173 V180 M952.5 170 V180 M957.5 173 V180 M962.5 155 V180 M967.5 173 V180 M972.5 170 V180 M977.5 173 V180 M982.5 170 V180 M987.5 173 V180 M992.5 170 V180 M997.5 173 V180 M1002.5 170 V180 M1007.5 173 V180 M1012.5 155 V180 M1017.5 173 V180 M1022.5 170 V180 M1027.5 173 V180 M1032.5 170 V180 M1037.5 173 V180 M1042.5 170 V180 M1047.5 173 V180 M1052.5 170 V180 M1057.5 173 V180 M1062.5 155 V180 M1067.5 173 V180 M1072.5 170 V180 M1077.5 173 V180 M1082.5 170 V180 M1087.5 173 V180 M1092.5 170 V180 M1097.5 173 V180 M1102.5 170 V180 M1107.5 173 V180 M1112.5 155 V180 M1117.5 173 V180 M1122.5 170 V180 M1127.5 173 V180 M1132.5 170 V180 M1137.5 173 V180 M1142.5 170 V180 M1147.5 173 V180 M1152.5 170 V180 M1157.5 173 V180 M1162.5 155 V180 M1167.5 173 V180 M1172.5 170 V180 M1177.5 173 V180 M1182.5 170 V180 M1187.5 173 V180 M1192.5 170 V180 M1197.5 173 V180 M1202.5 170 V180 M1207.5 173 V180 M1212.5 155 V180 M1217.5 173 V180 M1222.5 170 V180 M1227.5 173 V180 M1232.5 170 V180 M1237.5 173 V180 M1242.5 170 V180 M1247.5 173 V180 M1252.5 170 V180 M1257.5 173 V180 M1262.5 155 V180 M1267.5 173 V180 M1272.5 170 V180 M1277.5 173 V180 M1282.5 170 V180 M1287.5 173 V180 M1292.5 170 V180 M1297.5 173 V180 M1302.5 170 V180' stroke='#8a8a8a' stroke-width='1'/></svg>
<div class='t' style='left:365.5px;top:155.75px;font-size:10.3px;color:#bdbdbd;'>-50</div>
<div class='t' style='left:415.5px;top:155.75px;font-size:10.3px;color:#bdbdbd;'>0</div>
<div class='t' style='left:465.5px;top:155.75px;font-size:10.3px;color:#bdbdbd;'>50</div>
<div class='t' style='left:515.5px;top:155.75px;font-size:10.3px;color:#bdbdbd;'>100</div>
<div class='t' style='left:565.5px;top:155.75px;font-size:10.3px;color:#bdbdbd;'>150</div>
<div class='t' style='left:615.5px;top:155.75px;font-size:10.3px;color:#bdbdbd;'>200</div>
<div class='t' style='left:665.5px;top:155.75px;font-size:10.3px;color:#bdbdbd;'>250</div>
<div class='t' style='left:715.5px;top:155.75px;font-size:10.3px;color:#bdbdbd;'>300</div>
<div class='t' style='left:765.5px;top:155.75px;font-size:10.3px;color:#bdbdbd;'>350</div>
<div class='t' style='left:815.5px;top:155.75px;font-size:10.3px;color:#bdbdbd;'>400</div>
<div class='t' style='left:865.5px;top:155.75px;font-size:10.3px;color:#bdbdbd;'>450</div>
<div class='t' style='left:915.5px;top:155.75px;font-size:10.3px;color:#bdbdbd;'>500</div>
<div class='t' style='left:965.5px;top:155.75px;font-size:10.3px;color:#bdbdbd;'>550</div>
<div class='t' style='left:1015.5px;top:155.75px;font-size:10.3px;color:#bdbdbd;'>600</div>
<div class='t' style='left:1065.5px;top:155.75px;font-size:10.3px;color:#bdbdbd;'>650</div>
<div class='t' style='left:1115.5px;top:155.75px;font-size:10.3px;color:#bdbdbd;'>700</div>
<div class='t' style='left:1165.5px;top:155.75px;font-size:10.3px;color:#bdbdbd;'>750</div>
<div class='t' style='left:1215.5px;top:155.75px;font-size:10.3px;color:#bdbdbd;'>800</div>
<div class='t' style='left:1265.5px;top:155.75px;font-size:10.3px;color:#bdbdbd;'>850</div>
<div class='a' style='left:318px;top:155px;width:30px;height:12px;overflow:hidden'><div class='t' style='left:-2.5px;top:0.75px;font-size:10.3px;color:#bdbdbd'>-100</div></div>
<div class='t' style='left:294px;top:219.5px;font-size:10.3px;color:#bdbdbd;transform:rotate(-90deg);transform-origin:0 0'>-50</div>
<div class='t' style='left:294px;top:269.5px;font-size:10.3px;color:#bdbdbd;transform:rotate(-90deg);transform-origin:0 0'>0</div>
<div class='t' style='left:294px;top:319.5px;font-size:10.3px;color:#bdbdbd;transform:rotate(-90deg);transform-origin:0 0'>50</div>
<div class='t' style='left:294px;top:369.5px;font-size:10.3px;color:#bdbdbd;transform:rotate(-90deg);transform-origin:0 0'>100</div>
<div class='t' style='left:294px;top:419.5px;font-size:10.3px;color:#bdbdbd;transform:rotate(-90deg);transform-origin:0 0'>150</div>
<div class='t' style='left:294px;top:469.5px;font-size:10.3px;color:#bdbdbd;transform:rotate(-90deg);transform-origin:0 0'>200</div>
<div class='t' style='left:294px;top:519.5px;font-size:10.3px;color:#bdbdbd;transform:rotate(-90deg);transform-origin:0 0'>250</div>
<div class='t' style='left:294px;top:569.5px;font-size:10.3px;color:#bdbdbd;transform:rotate(-90deg);transform-origin:0 0'>300</div>
<div class='t' style='left:294px;top:619.5px;font-size:10.3px;color:#bdbdbd;transform:rotate(-90deg);transform-origin:0 0'>350</div>
<div class='t' style='left:294px;top:669.5px;font-size:10.3px;color:#bdbdbd;transform:rotate(-90deg);transform-origin:0 0'>400</div>
<div class='t' style='left:294px;top:719.5px;font-size:10.3px;color:#bdbdbd;transform:rotate(-90deg);transform-origin:0 0'>450</div>
<div class='t' style='left:294px;top:769.5px;font-size:10.3px;color:#bdbdbd;transform:rotate(-90deg);transform-origin:0 0'>500</div>
<div class='t' style='left:294px;top:819.5px;font-size:10.3px;color:#bdbdbd;transform:rotate(-90deg);transform-origin:0 0'>550</div>
<svg style='left:0;top:0' width='1600' height='868'><path d='M308.5 183.0 H318 M311.5 188.0 H318 M308.5 193.0 H318 M311.5 198.0 H318 M308.5 203.0 H318 M311.5 208.0 H318 M308.5 213.0 H318 M311.5 218.0 H318 M293 223.0 H318 M311.5 228.0 H318 M308.5 233.0 H318 M311.5 238.0 H318 M308.5 243.0 H318 M311.5 248.0 H318 M308.5 253.0 H318 M311.5 258.0 H318 M308.5 263.0 H318 M311.5 268.0 H318 M293 273.0 H318 M311.5 278.0 H318 M308.5 283.0 H318 M311.5 288.0 H318 M308.5 293.0 H318 M311.5 298.0 H318 M308.5 303.0 H318 M311.5 308.0 H318 M308.5 313.0 H318 M311.5 318.0 H318 M293 323.0 H318 M311.5 328.0 H318 M308.5 333.0 H318 M311.5 338.0 H318 M308.5 343.0 H318 M311.5 348.0 H318 M308.5 353.0 H318 M311.5 358.0 H318 M308.5 363.0 H318 M311.5 368.0 H318 M293 373.0 H318 M311.5 378.0 H318 M308.5 383.0 H318 M311.5 388.0 H318 M308.5 393.0 H318 M311.5 398.0 H318 M308.5 403.0 H318 M311.5 408.0 H318 M308.5 413.0 H318 M311.5 418.0 H318 M293 423.0 H318 M311.5 428.0 H318 M308.5 433.0 H318 M311.5 438.0 H318 M308.5 443.0 H318 M311.5 448.0 H318 M308.5 453.0 H318 M311.5 458.0 H318 M308.5 463.0 H318 M311.5 468.0 H318 M293 473.0 H318 M311.5 478.0 H318 M308.5 483.0 H318 M311.5 488.0 H318 M308.5 493.0 H318 M311.5 498.0 H318 M308.5 503.0 H318 M311.5 508.0 H318 M308.5 513.0 H318 M311.5 518.0 H318 M293 523.0 H318 M311.5 528.0 H318 M308.5 533.0 H318 M311.5 538.0 H318 M308.5 543.0 H318 M311.5 548.0 H318 M308.5 553.0 H318 M311.5 558.0 H318 M308.5 563.0 H318 M311.5 568.0 H318 M293 573.0 H318 M311.5 578.0 H318 M308.5 583.0 H318 M311.5 588.0 H318 M308.5 593.0 H318 M311.5 598.0 H318 M308.5 603.0 H318 M311.5 608.0 H318 M308.5 613.0 H318 M311.5 618.0 H318 M293 623.0 H318 M311.5 628.0 H318 M308.5 633.0 H318 M311.5 638.0 H318 M308.5 643.0 H318 M311.5 648.0 H318 M308.5 653.0 H318 M311.5 658.0 H318 M308.5 663.0 H318 M311.5 668.0 H318 M293 673.0 H318 M311.5 678.0 H318 M308.5 683.0 H318 M311.5 688.0 H318 M308.5 693.0 H318 M311.5 698.0 H318 M308.5 703.0 H318 M311.5 708.0 H318 M308.5 713.0 H318 M311.5 718.0 H318 M293 723.0 H318 M311.5 728.0 H318 M308.5 733.0 H318 M311.5 738.0 H318 M308.5 743.0 H318 M311.5 748.0 H318 M308.5 753.0 H318 M311.5 758.0 H318 M308.5 763.0 H318 M311.5 768.0 H318 M293 773.0 H318 M311.5 778.0 H318 M308.5 783.0 H318 M311.5 788.0 H318 M308.5 793.0 H318 M311.5 798.0 H318 M308.5 803.0 H318 M311.5 808.0 H318 M308.5 813.0 H318 M311.5 818.0 H318 M293 823.0 H318 M311.5 828.0 H318 M308.5 833.0 H318 M311.5 838.0 H318 M308.5 843.0 H318' stroke='#a8a8a8' stroke-width='1'/></svg>
<svg style='left:903px;top:172px' width='12' height='9' viewBox='0 0 12 9'><path d='M1.5 0.5 H10.5 L6 8.5 Z' fill='#e6e6e6'/></svg>
<svg style='left:308px;top:273px' width='10' height='12' viewBox='0 0 10 12'><path d='M0.5 1 V11 L9.5 6 Z' fill='#e6e6e6'/></svg>
<div class='a' style='left:412px;top:273px;width:802px;height:482px;overflow:hidden;background:linear-gradient(#c3ecfb 0px,#d5f3fc 55px,#e6f8fd 105px,#f4fcfe 140px,#ffffff 162px)'>
<div class='a' style='left:65.19999999999999px;top:23.19999999999999px;width:94.6px;height:94.6px;border-radius:50%;background:linear-gradient(100deg,#c3ebf3,#cde6f2 45%,#d6dff0 80%,#d9dcf0)'></div>
<div class='a' style='left:679px;top:33.5px;width:30px;height:30px;border-radius:50%;background:linear-gradient(90deg,#c4e8f0,#cfdff0)'></div>
<div class='a' style='left:488px;top:239px;width:378px;height:378px;border-radius:50%;background:linear-gradient(90deg,#def5f6,#e5eef5 40%,#e9e9f4 70%,#ebe8f4)'></div>
<div class='a' style='left:51px;top:17px;width:65px;height:64px;border:1px dashed #e6d4d0'></div>
<div class='a' style='left:103px;top:14px;width:304px;height:73px;border:1px dashed #e6d4d0'></div>
<div class='a' style='left:600px;top:40px;width:120px;height:28px;border:1px dashed #e6d4d0'></div>
<div class='a' style='left:703px;top:40px;width:28px;height:26px;border:1px dashed #e6d4d0'></div>
<div class='a' style='left:733px;top:40px;width:32px;height:26px;border:1px dashed #e6d4d0'></div>
<div class='a' style='left:764px;top:40px;width:33px;height:26px;border:1px dashed #e6d4d0'></div>
<div class='a' style='left:130px;top:107px;width:137px;height:136px;border:1px dashed #cfcfcf'></div>
<div class='a' style='left:437px;top:107px;width:137px;height:136px;border:1px dashed #cfcfcf'></div>
<div class='a' style='left:213px;top:290px;width:137px;height:136px;border:1px dashed #cfcfcf'></div>
<div class='a' style='left:532px;top:290px;width:137px;height:136px;border:1px dashed #cfcfcf'></div>
<svg style='left:68px;top:37px' width='30' height='28' viewBox='0 0 30 28'><path d='M15 0.5 L28.8 14.5 H24.5 V27.5 H6 V14.5 H1.2 Z' fill='#c27470'/><rect x='16.5' y='15.5' width='5' height='3.5' fill='#fff'/></svg>
</div>
<div class='t' style='left:520px;top:312.58px;font-size:25.2px;color:#b0605f;font-weight:bold;font-style:italic'>My smart door locker</div>
<div class='t' style='left:1038.5px;top:319.49px;font-size:18.6px;color:#0a0a0a;letter-spacing:-0.5px'>14:08:14</div>
<svg style='left:1116px;top:314px' width='24' height='22' viewBox='0 0 24 22'><path d='M1.5 6.5 L12.5 15.5 L7.5 20.5 V1 L12.5 6 L1.5 15' fill='none' stroke='#1b4d4d' stroke-width='1.6' stroke-linejoin='round'/><path d='M15 8 Q17 10.75 15 13.5 M18.2 5.8 Q21.5 10.75 18.2 15.7' fill='none' stroke='#1b4d4d' stroke-width='1.5' stroke-linecap='round'/></svg>
<svg style='left:1145px;top:317px' width='24' height='18' viewBox='0 0 24 18'><path d='M1.5 6.3 Q11.5 -2.5 21.5 6.3 M4.8 9.6 Q11.5 3.8 18.2 9.6 M8 12.8 Q11.5 10 15 12.8' fill='none' stroke='#1b4d4d' stroke-width='2' stroke-linecap='round'/><circle cx='11.5' cy='16' r='1.4' fill='#1b4d4d'/></svg>
<svg style='left:1177.5px;top:314.5px' width='23' height='23' viewBox='0 0 23 23'><path d='M21.50 9.47 L21.70 11.46 L19.55 13.07 L19.09 14.61 L20.00 17.14 L18.74 18.69 L16.08 18.30 L14.67 19.06 L13.53 21.50 L11.54 21.70 L9.93 19.55 L8.39 19.09 L5.86 20.00 L4.31 18.74 L4.70 16.08 L3.94 14.67 L1.50 13.53 L1.30 11.54 L3.45 9.93 L3.91 8.39 L3.00 5.86 L4.26 4.31 L6.92 4.70 L8.33 3.94 L9.47 1.50 L11.46 1.30 L13.07 3.45 L14.61 3.91 L17.14 3.00 L18.69 4.26 L18.30 6.92 L19.06 8.33Z' fill='none' stroke='#1b4d4d' stroke-width='1.5' stroke-linejoin='round'/><circle cx='11.5' cy='11.5' r='3.8' fill='none' stroke='#1b4d4d' stroke-width='1.6'/></svg>
<div class='a' style='left:543px;top:381px;width:134px;height:134px;border-radius:17px;background:#fcd596;overflow:hidden'><svg style='left:0;top:0' width='134' height='134' viewBox='0 0 134 134'>
<defs><filter id='sh' x='-20%' y='-20%' width='140%' height='140%'><feGaussianBlur stdDeviation='2.5'/></filter></defs>
<rect x='18' y='16' width='94' height='59' rx='5' fill='#4fb4c6'/>
<rect x='18' y='27.5' width='94' height='12.5' fill='#fdfdfd'/>
<rect x='31' y='34' width='97' height='61' rx='6' fill='#d9a35c' opacity='0.6' filter='url(#sh)'/>
<rect x='29.5' y='32.5' width='95.5' height='59' rx='6' fill='#f08535'/>
<rect x='29.5' y='45' width='95.5' height='12' fill='#fdfdfd'/>
<circle cx='119.5' cy='117' r='8.5' fill='#6cb9c9'/>
<path d='M119.5 111.5 V122.5 M114 117 H125' stroke='#f6d69c' stroke-width='2.6'/>
</svg></div>
<div class='a' style='left:850px;top:381px;width:134px;height:134px;border-radius:17px;background:#fcd596;overflow:hidden'><svg style='left:0;top:0' width='134' height='134' viewBox='0 0 134 134'>
<circle cx='39' cy='32.5' r='8' fill='#8cc4f1'/>
<path d='M21.5 57 Q21.5 43.5 39 43.5 Q56.5 43.5 56.5 57 Z' fill='#8cc4f1'/>
<rect x='67.5' y='38' width='43' height='9.5' rx='4.5' fill='#f6fbff' stroke='#b8b8b0' stroke-width='1.2'/>
<path d='M72 45 H76 M74 41 V43' stroke='#8aa' stroke-width='1'/>
<rect x='8.5' y='67.5' width='117' height='11.5' rx='5.5' fill='#f6fbff' stroke='#b8b8b0' stroke-width='1.4'/>
<circle cx='13.5' cy='73' r='2.3' fill='none' stroke='#88b' stroke-width='0.8'/>
<path d='M20 73 H22 M26 73 H28' stroke='#99a' stroke-width='1.4'/>
<rect x='8.5' y='91.5' width='117' height='11.5' rx='5.5' fill='#f6fbff' stroke='#b8b8b0' stroke-width='1.4'/>
<path d='M11.5 98.5 V95.5 Q13.5 93.5 15.5 95.5 V98.5 Z' fill='none' stroke='#88b' stroke-width='0.8'/>
</svg></div>
<div class='a' style='left:626px;top:563px;width:134px;height:134px;border-radius:17px;background:#fcd596;overflow:hidden'><svg style='left:0;top:0' width='134' height='134' viewBox='0 0 134 134'>
<rect x='10' y='19.5' width='113.5' height='72.5' fill='#7fbcc4'/>
<path d='M9.5 19 H124 V92.5 H9.5 Z' fill='none' stroke='#e6d9a6' stroke-width='1'/>
<path d='M43 57 A24 24 0 0 1 91 57 Z' fill='#e8efe0'/>
<path d='M90 26 Q100 30 104 41 M88 33 Q94 36 96 42' fill='none' stroke='#f2f6f2' stroke-width='1.3'/>
<rect x='32' y='56.5' width='74' height='90' rx='6' fill='#6a6a6a'/>
<rect x='38' y='62.5' width='62' height='80' rx='2' fill='#8fc3ee'/>
<rect x='61' y='64.5' width='16' height='2.5' rx='1.2' fill='#f4f4f4'/>
<rect x='43' y='71.5' width='54' height='33' rx='3' fill='#f08535'/>
<rect x='43' y='78.5' width='54' height='6.5' fill='#fdfdfd'/>
<rect x='43' y='112' width='54' height='30' rx='3' fill='#52b6c6'/>
<rect x='43' y='118.5' width='54' height='7' fill='#fdfdfd'/>
</svg></div>
<div class='a' style='left:945px;top:563px;width:134px;height:134px;border-radius:17px;background:#fcd596;overflow:hidden'><svg style='left:0;top:0' width='134' height='134' viewBox='0 0 134 134'>
<rect x='11' y='41.5' width='116' height='11' rx='4' fill='#f8fbff' stroke='#a9b8c8' stroke-width='1.6'/>
<path d='M13.5 49 V46.5 Q15.5 43.5 17.5 46.5 V49 Z' fill='none' stroke='#7aa7d8' stroke-width='0.8'/>
<text x='17.0' y='52' font-family='Liberation Sans' font-size='11' fill='#7aa7d8'>*</text><text x='25.9' y='52' font-family='Liberation Sans' font-size='11' fill='#7aa7d8'>*</text><text x='34.7' y='52' font-family='Liberation Sans' font-size='11' fill='#7aa7d8'>*</text><text x='43.5' y='52' font-family='Liberation Sans' font-size='11' fill='#7aa7d8'>*</text><text x='52.4' y='52' font-family='Liberation Sans' font-size='11' fill='#7aa7d8'>*</text><text x='61.2' y='52' font-family='Liberation Sans' font-size='11' fill='#7aa7d8'>*</text><text x='70.1' y='52' font-family='Liberation Sans' font-size='11' fill='#7aa7d8'>*</text><text x='78.9' y='52' font-family='Liberation Sans' font-size='11' fill='#7aa7d8'>*</text><text x='87.8' y='52' font-family='Liberation Sans' font-size='11' fill='#7aa7d8'>*</text><text x='96.6' y='52' font-family='Liberation Sans' font-size='11' fill='#7aa7d8'>*</text><text x='105.5' y='52' font-family='Liberation Sans' font-size='11' fill='#7aa7d8'>*</text><text x='114.3' y='52' font-family='Liberation Sans' font-size='11' fill='#7aa7d8'>*</text>
<path d='M63 94 V86.5 Q63 79.5 70.5 79.5 Q78 79.5 78 86.5 V88' fill='none' stroke='#8cc4f1' stroke-width='3.2'/>
<rect x='56' y='94' width='27.5' height='15.5' rx='1.5' fill='#8cc4f1'/>
</svg></div>
<svg style='left:0;top:0' width='1600' height='868'><rect x='411.5' y='272.5' width='803' height='483' fill='none' stroke='#fff' stroke-width='1'/><rect x='411.5' y='272.5' width='803' height='483' fill='none' stroke='#111' stroke-width='1' stroke-dasharray='2 2'/></svg>
<div class='a' style='left:1307px;top:122px;width:293px;height:724px;background:#333333'></div>
<div class='t' style='left:1326px;top:131.10px;font-size:14px;color:#d6d6d6;'>properties</div>
<div class='a' style='left:1307px;top:154px;width:293px;height:692px;overflow:hidden'>
<div class='a' style='left:0;top:0px;width:293px;height:33px;background:#323232;border-top:1px solid #585858'></div>
<div class='a' style='left:167px;top:0px;width:1px;height:33px;background:#585858'></div>
<div class='t' style='left:15px;top:8.60px;font-size:14px;color:#cfcfcf'>name:</div>
<div class='a' style='left:182px;top:6.5px;width:120px;height:20px;border-radius:3px;background:#202020'></div>
<div class='t' style='left:186px;top:8.60px;font-size:14px;color:#e6e6e6'>home_page</div>
<div class='a' style='left:0;top:32px;width:293px;height:33px;background:#414141;border-top:1px solid #585858'></div>
<div class='a' style='left:167px;top:32px;width:1px;height:33px;background:#585858'></div>
<div class='t' style='left:15px;top:40.60px;font-size:14px;color:#cfcfcf'>type:</div>
<div class='a' style='left:182px;top:38.5px;width:120px;height:20px;border-radius:3px;background:#393939'></div>
<div class='t' style='left:186px;top:40.60px;font-size:14px;color:#6a6a6a'>window</div>
<div class='a' style='left:0;top:64px;width:293px;height:33px;background:#323232;border-top:1px solid #585858'></div>
<div class='a' style='left:167px;top:64px;width:1px;height:33px;background:#585858'></div>
<div class='t' style='left:15px;top:72.60px;font-size:14px;color:#cfcfcf'>x:</div>
<div class='a' style='left:182px;top:70.5px;width:120px;height:20px;border-radius:3px;background:#202020'></div>
<div class='t' style='left:186px;top:72.60px;font-size:14px;color:#e6e6e6'>0</div>
<div class='a' style='left:0;top:96px;width:293px;height:33px;background:#414141;border-top:1px solid #585858'></div>
<div class='a' style='left:167px;top:96px;width:1px;height:33px;background:#585858'></div>
<div class='t' style='left:15px;top:104.60px;font-size:14px;color:#cfcfcf'>y:</div>
<div class='a' style='left:182px;top:102.5px;width:120px;height:20px;border-radius:3px;background:#202020'></div>
<div class='t' style='left:186px;top:104.60px;font-size:14px;color:#e6e6e6'>0</div>
<div class='a' style='left:0;top:128px;width:293px;height:33px;background:#323232;border-top:1px solid #585858'></div>
<div class='a' style='left:167px;top:128px;width:1px;height:33px;background:#585858'></div>
<div class='t' style='left:15px;top:136.60px;font-size:14px;color:#cfcfcf'>w:</div>
<div class='a' style='left:182px;top:134.5px;width:120px;height:20px;border-radius:3px;background:#2b2b2b'></div>
<div class='t' style='left:186px;top:136.60px;font-size:14px;color:#6a6a6a'>800</div>
<div class='a' style='left:0;top:160px;width:293px;height:33px;background:#414141;border-top:1px solid #585858'></div>
<div class='a' style='left:167px;top:160px;width:1px;height:33px;background:#585858'></div>
<div class='t' style='left:15px;top:168.60px;font-size:14px;color:#cfcfcf'>h:</div>
<div class='a' style='left:182px;top:166.5px;width:120px;height:20px;border-radius:3px;background:#393939'></div>
<div class='t' style='left:186px;top:168.60px;font-size:14px;color:#6a6a6a'>480</div>
<div class='a' style='left:0;top:192px;width:293px;height:34px;background:#323232;border-top:1px solid #585858'></div>
<div class='a' style='left:167px;top:192px;width:1px;height:34px;background:#585858'></div>
<div class='t' style='left:15px;top:201.10px;font-size:14px;color:#cfcfcf'>enable:</div>
<div class='a' style='left:182px;top:202.0px;width:14px;height:14px;border-radius:2px;background:#b4b4b4'></div>
<svg style='left:182px;top:202.0px' width='14' height='14' viewBox='0 0 14 14'><path d='M3.2 7.2 L6 10 L11 4' fill='none' stroke='#111' stroke-width='2'/></svg>
<div class='a' style='left:0;top:225px;width:293px;height:34.5px;background:#414141;border-top:1px solid #585858'></div>
<div class='a' style='left:167px;top:225px;width:1px;height:34.5px;background:#585858'></div>
<div class='t' style='left:15px;top:234.35px;font-size:14px;color:#cfcfcf'>visible:</div>
<div class='a' style='left:182px;top:235.2px;width:14px;height:14px;border-radius:2px;background:#b4b4b4'></div>
<svg style='left:182px;top:235.2px' width='14' height='14' viewBox='0 0 14 14'><path d='M3.2 7.2 L6 10 L11 4' fill='none' stroke='#111' stroke-width='2'/></svg>
<div class='a' style='left:0;top:258.5px;width:293px;height:33px;background:#323232;border-top:1px solid #585858'></div>
<div class='a' style='left:167px;top:258.5px;width:1px;height:33px;background:#585858'></div>
<div class='t' style='left:15px;top:267.10px;font-size:14px;color:#cfcfcf'>state:</div>
<div class='a' style='left:182px;top:265.0px;width:72px;height:20px;background:#222'></div>
<div class='t' style='left:186px;top:267.10px;font-size:14px;color:#e6e6e6'>normal</div>
<svg style='left:238px;top:271.0px' width='12' height='8' viewBox='0 0 12 8'><path d='M2 2 L6 6 L10 2' fill='none' stroke='#e0e0e0' stroke-width='1.4'/></svg>
<div class='a' style='left:0;top:290.5px;width:293px;height:32.5px;background:#414141;border-top:1px solid #585858'></div>
<div class='a' style='left:167px;top:290.5px;width:1px;height:32.5px;background:#585858'></div>
<div class='t' style='left:15px;top:298.85px;font-size:14px;color:#cfcfcf'>border_color:</div>
<div class='a' style='left:182px;top:296.8px;width:120px;height:20px;border-radius:3px;background:#393939'></div>
<div class='t' style='left:186px;top:298.85px;font-size:14px;color:#6a6a6a'>#00000000</div>
<div class='a' style='left:0;top:322px;width:293px;height:33px;background:#323232;border-top:1px solid #585858'></div>
<div class='a' style='left:167px;top:322px;width:1px;height:33px;background:#585858'></div>
<div class='t' style='left:15px;top:330.60px;font-size:14px;color:#cfcfcf'>border:</div>
<div class='a' style='left:182px;top:328.5px;width:20px;height:20px;border:1px solid #2c7be5'></div>
<div class='a' style='left:225px;top:328.5px;width:20px;height:20px;border-top:1px solid #eee;border-right:1px solid #eee;border-bottom:1px solid #eee;border-left:1px dashed #eee'></div>
<div class='a' style='left:268px;top:328.5px;width:20px;height:20px;border-top:1px dashed #eee;border-right:1px solid #eee;border-bottom:1px solid #eee;border-left:1px solid #eee'></div>
<div class='a' style='left:0;top:354px;width:293px;height:33px;background:#414141;border-top:1px solid #585858'></div>
<div class='a' style='left:167px;top:354px;width:1px;height:33px;background:#585858'></div>
<div class='t' style='left:15px;top:362.60px;font-size:14px;color:#cfcfcf'>border_width:</div>
<div class='a' style='left:182px;top:360.5px;width:120px;height:20px;border-radius:3px;background:#202020'></div>
<div class='t' style='left:186px;top:362.60px;font-size:14px;color:#e6e6e6'>1</div>
<div class='a' style='left:0;top:386px;width:293px;height:33px;background:#323232;border-top:1px solid #585858'></div>
<div class='a' style='left:167px;top:386px;width:1px;height:33px;background:#585858'></div>
<div class='t' style='left:34px;top:394.60px;font-size:14px;color:#cfcfcf'>round_radius:</div>
<svg style='left:14px;top:398.5px' width='12' height='8' viewBox='0 0 12 8'><path d='M2 2 L6 6 L10 2' fill='none' stroke='#e0e0e0' stroke-width='1.6'/></svg>
<div class='a' style='left:182px;top:392.5px;width:120px;height:20px;border-radius:3px;background:#202020'></div>
<div class='t' style='left:186px;top:394.60px;font-size:14px;color:#e6e6e6'>0</div>
<div class='a' style='left:0;top:418px;width:293px;height:33px;background:#414141;border-top:1px solid #585858'></div>
<div class='a' style='left:167px;top:418px;width:1px;height:33px;background:#585858'></div>
<div class='t' style='left:15px;top:426.60px;font-size:14px;color:#cfcfcf'>bg_color:</div>
<div class='a' style='left:182px;top:424.5px;width:120px;height:20px;border-radius:3px;background:#202020'></div>
<div class='t' style='left:186px;top:426.60px;font-size:14px;color:#e6e6e6'>#FFFFFF</div>
<div class='a' style='left:0;top:450px;width:293px;height:33px;background:#323232;border-top:1px solid #585858'></div>
<div class='a' style='left:167px;top:450px;width:1px;height:33px;background:#585858'></div>
<div class='t' style='left:15px;top:458.60px;font-size:14px;color:#cfcfcf'>bg_image:</div>
<div class='a' style='left:182px;top:456.5px;width:120px;height:20px;border-radius:3px;background:#202020'></div>
<div class='t' style='left:186px;top:458.60px;font-size:14px;color:#e6e6e6'>1</div>
<div class='a' style='left:0;top:482px;width:293px;height:33.5px;background:#414141;border-top:1px solid #585858'></div>
<div class='a' style='left:167px;top:482px;width:1px;height:33.5px;background:#585858'></div>
<div class='t' style='left:15px;top:490.85px;font-size:14px;color:#cfcfcf'>bg_image_draw_type:</div>
<div class='a' style='left:182px;top:488.8px;width:120px;height:20px;border-radius:3px;background:#262626'></div>
<svg style='left:185px;top:491.8px' width='100' height='14' viewBox='0 0 100 14'><g transform='skewX(-12) translate(3 0)' fill='none' stroke='#8c8c8c' stroke-width='0.75' stroke-linecap='round'><path transform='translate(0 0)' d='M1.5 2.5 L3 4 M0.5 6.5 H3 V10.5 L1 12 M1.5 12 Q6 11.5 12.5 12.2 M6 1.5 L5 4 M5 3.5 H12 M8.5 1 V7 M4.5 7 H12.5 M7.5 7 Q7 10 4.5 11 M9.8 7 V10 H12.5'/><path transform='translate(14.3 0)' d='M0.5 4.5 H4.5 M2.5 1 V11.5 L1.5 11 M0.5 8.5 L4.5 6.5 M5.5 1.5 H12 L7 5.5 M8 3.5 L12 5.5 M6 6.5 H12 M5.5 9 H12.5 M9 5.5 V12.5'/><path transform='translate(28.6 0)' d='M0.5 6.8 H13.5'/><path transform='translate(42.9 0)' d='M6.5 1 L0.5 7 M6.5 1 L12.5 7 M6.5 5 V12.5'/><path transform='translate(57.2 0)' d='M1.5 2.5 L3 4 M0.5 6.5 H3 V10.5 L1 12 M1.5 12 Q6 11.5 12.5 12.2 M6 1.5 L5 4 M5 3.5 H12 M8.5 1 V7 M4.5 7 H12.5 M7.5 7 Q7 10 4.5 11 M9.8 7 V10 H12.5'/><path transform='translate(71.5 0)' d='M0.5 3 H5 M2.8 3 V10 M0.5 11 L5.5 9 M6 1.5 H13 M9.5 1.5 L9 3 M6.5 3.5 H12.5 V9.5 H6.5 Z M6.5 5.5 H12.5 M6.5 7.5 H12.5 M8.5 9.5 L6.5 12.5 M10.5 9.5 L13 12'/><circle cx='88' cy='12' r='0.5'/><circle cx='91' cy='12' r='0.5'/><circle cx='94' cy='12' r='0.5'/></g></svg>
<div class='a' style='left:0;top:514.5px;width:293px;height:34px;background:#323232;border-top:1px solid #585858'></div>
<div class='a' style='left:167px;top:514.5px;width:1px;height:34px;background:#585858'></div>
<div class='t' style='left:15px;top:523.60px;font-size:14px;color:#cfcfcf'>feedback:</div>
<div class='a' style='left:182px;top:524.5px;width:14px;height:14px;border-radius:2px;background:#1c1c1c;border:2px solid #8a8a8a'></div>
<div class='a' style='left:0;top:547.5px;width:293px;height:34px;background:#414141;border-top:1px solid #585858'></div>
<div class='a' style='left:167px;top:547.5px;width:1px;height:34px;background:#585858'></div>
<div class='t' style='left:15px;top:556.60px;font-size:14px;color:#cfcfcf'>sensitive:</div>
<div class='a' style='left:182px;top:557.5px;width:14px;height:14px;border-radius:2px;background:#b4b4b4'></div>
<svg style='left:182px;top:557.5px' width='14' height='14' viewBox='0 0 14 14'><path d='M3.2 7.2 L6 10 L11 4' fill='none' stroke='#111' stroke-width='2'/></svg>
<div class='a' style='left:0;top:580.5px;width:293px;height:33px;background:#323232;border-top:1px solid #585858'></div>
<div class='a' style='left:167px;top:580.5px;width:1px;height:33px;background:#585858'></div>
<div class='t' style='left:15px;top:589.10px;font-size:14px;color:#cfcfcf'>dirty_rect_tolerance:</div>
<div class='a' style='left:182px;top:587.0px;width:120px;height:20px;border-radius:3px;background:#202020'></div>
<div class='t' style='left:186px;top:589.10px;font-size:14px;color:#e6e6e6'>4</div>
<div class='a' style='left:0;top:612.5px;width:293px;height:34px;background:#414141;border-top:1px solid #585858'></div>
<div class='a' style='left:167px;top:612.5px;width:1px;height:34px;background:#585858'></div>
<div class='t' style='left:15px;top:621.60px;font-size:14px;color:#cfcfcf'>disable_anim_hint:</div>
<div class='a' style='left:182px;top:622.5px;width:14px;height:14px;border-radius:2px;background:#1c1c1c;border:2px solid #8a8a8a'></div>
<div class='a' style='left:0;top:645.5px;width:293px;height:34.5px;background:#323232;border-top:1px solid #585858'></div>
<div class='a' style='left:167px;top:645.5px;width:1px;height:34.5px;background:#585858'></div>
<div class='t' style='left:15px;top:654.85px;font-size:14px;color:#cfcfcf'>focusable:</div>
<div class='a' style='left:182px;top:655.8px;width:14px;height:14px;border-radius:2px;background:#1c1c1c;border:2px solid #8a8a8a'></div>
<div class='a' style='left:0;top:679px;width:293px;height:34px;background:#414141;border-top:1px solid #585858'></div>
<div class='a' style='left:167px;top:679px;width:1px;height:34px;background:#585858'></div>
<div class='t' style='left:15px;top:688.10px;font-size:14px;color:#cfcfcf'>fullscreen:</div>
<div class='a' style='left:182px;top:689.0px;width:14px;height:14px;border-radius:2px;background:#1c1c1c;border:2px solid #8a8a8a'></div>
</div>
<div class='a' style='left:1307px;top:154px;width:1px;height:692px;background:#585858'></div>
<div class='a' style='left:1589px;top:281px;width:10px;height:59px;border-radius:4px;background:#111;border:1px solid #9a9a9a'></div>
<svg style='left:1591px;top:302px' width='6' height='36' viewBox='0 0 6 36'><rect x='0' y='0' width='6' height='1' fill='#3ecf66'/><rect x='0' y='2' width='6' height='1' fill='#3ecf66'/><rect x='0' y='4' width='6' height='1' fill='#3ecf66'/><rect x='0' y='6' width='6' height='1' fill='#3ecf66'/><rect x='0' y='8' width='6' height='1' fill='#3ecf66'/><rect x='0' y='10' width='6' height='1' fill='#3ecf66'/><rect x='0' y='12' width='6' height='1' fill='#3ecf66'/><rect x='0' y='14' width='6' height='1' fill='#3ecf66'/><rect x='0' y='16' width='6' height='1' fill='#3ecf66'/><rect x='0' y='18' width='6' height='1' fill='#3ecf66'/><rect x='0' y='20' width='6' height='1' fill='#3ecf66'/><rect x='0' y='22' width='6' height='1' fill='#3ecf66'/><rect x='0' y='24' width='6' height='1' fill='#3ecf66'/><rect x='0' y='26' width='6' height='1' fill='#3ecf66'/><rect x='0' y='28' width='6' height='1' fill='#3ecf66'/><rect x='0' y='30' width='6' height='1' fill='#3ecf66'/><rect x='0' y='32' width='6' height='1' fill='#3ecf66'/><rect x='1' y='34' width='4' height='1' fill='#3ecf66'/></svg>
<div class='a' style='left:0;top:846px;width:1600px;height:13px;background:#535353'></div>
<div class='a' style='left:0;top:859px;width:1600px;height:2px;background:#1e1e1e'></div>
<div class='a' style='left:0;top:861px;width:1600px;height:7px;background:linear-gradient(90deg,#6a5a5e,#5e4f52 300px,#8a7679 700px,#9a8689 1000px,#8f7b7e 1300px,#7e6b6e 1600px)'></div>
<div class='a' style='left:0;top:861px;width:1585px;height:1px;background:#b8acad'></div>
<div class='a' style='left:12px;top:862px;width:30px;height:14px;border-radius:50%;background:radial-gradient(#cfe3f0,#6a8aa8);border:1px solid #3a4a6a'></div>
<div class='a' style='left:72px;top:864px;width:10px;height:10px;border-radius:50%;background:#b8e020'></div>
<div class='a' style='left:85px;top:864px;width:10px;height:10px;border-radius:50%;background:#36a0e0'></div>
<div class='a' style='left:114px;top:863px;width:148px;height:5px;background:#ececec'></div>
<div class='a' style='left:262px;top:863px;width:56px;height:5px;background:#1e88f5'></div>
<div class='a' style='left:324px;top:862px;width:58px;height:6px;border-radius:3px 3px 0 0;background:linear-gradient(#e8e2e3,#c8bcbe);border:1px solid #8a7a7c'></div>
<div class='a' style='left:634px;top:862px;width:60px;height:6px;border-radius:3px 3px 0 0;background:linear-gradient(#e8e2e3,#c8bcbe);border:1px solid #8a7a7c'></div>
<div class='a' style='left:696px;top:862px;width:60px;height:6px;border-radius:3px 3px 0 0;background:linear-gradient(#e8e2e3,#c8bcbe);border:1px solid #8a7a7c'></div>
<div class='a' style='left:758px;top:862px;width:60px;height:6px;border-radius:3px 3px 0 0;background:linear-gradient(#e8e2e3,#c8bcbe);border:1px solid #8a7a7c'></div>
<div class='a' style='left:820px;top:862px;width:60px;height:6px;border-radius:3px 3px 0 0;background:linear-gradient(#e8e2e3,#c8bcbe);border:1px solid #8a7a7c'></div>
<div class='a' style='left:882px;top:862px;width:60px;height:6px;border-radius:3px 3px 0 0;background:linear-gradient(#e8e2e3,#c8bcbe);border:1px solid #8a7a7c'></div>
<div class='a' style='left:352px;top:864px;width:30px;height:10px;border-radius:50%;background:#e0463a'></div>
<div class='a' style='left:462px;top:864px;width:24px;height:8px;border-radius:3px;background:#1d8fd0'></div>
<div class='a' style='left:530px;top:864px;width:20px;height:8px;border-radius:50%;background:#1aa6a0'></div>
<div class='a' style='left:910px;top:864px;width:30px;height:8px;border-radius:3px;background:#1e2a30;border:1px solid #2a8ac0'></div>
<div class='a' style='left:1585px;top:860px;width:16px;height:9px;background:rgba(255,255,255,0.12);border:1px solid #cfc6c7'></div>
<div class='t' style='left:1533px;top:865.5px;font-size:12px;color:#fff;letter-spacing:0.5px'>14:03</div>
</body></html>
